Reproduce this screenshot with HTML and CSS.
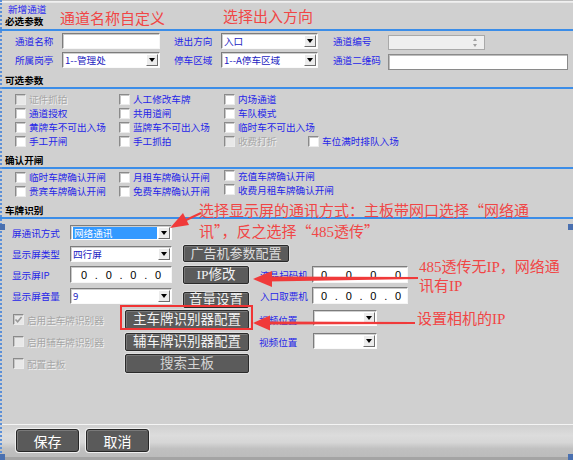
FILE: index.html
```html
<!DOCTYPE html>
<html lang="zh-CN">
<head>
<meta charset="utf-8">
<title>新增通道</title>
<link rel="stylesheet" href="styles.css">
</head>
<body>
<div class="win">
  <div class="main">
    <div class="topline"></div>
    <div class="caption">新增通道</div>
    <div class="sec-title first">必选参数</div>
    <div class="rule"></div>
    <div class="req">
      <span class="lbl">通道名称</span>
      <div class="tb w98"></div>
      <span class="lbl">进出方向</span>
      <div class="sel w97"><span class="val">入口</span><span class="dd"></span></div>
      <span class="lbl">通道编号</span>
      <div class="spin"></div>
      <span class="lbl">所属岗亭</span>
      <div class="sel w98"><span class="val">1--管理处</span><span class="dd"></span></div>
      <span class="lbl">停车区域</span>
      <div class="sel w97"><span class="val">1--A停车区域</span><span class="dd"></span></div>
      <span class="lbl">通道二维码</span>
      <div class="tb w180 dn"></div>
    </div>

    <div class="sec-title">可选参数</div>
    <div class="rule"></div>
    <div class="opt">
      <label class="cb off"><span class="box"></span>证件抓拍</label>
      <label class="cb"><span class="box"></span>人工修改车牌</label>
      <label class="cb"><span class="box"></span>内场通道</label>
      <span></span>
      <label class="cb"><span class="box"></span>通道授权</label>
      <label class="cb"><span class="box"></span>共用道闸</label>
      <label class="cb"><span class="box"></span>车队模式</label>
      <span></span>
      <label class="cb"><span class="box"></span>黄牌车不可出入场</label>
      <label class="cb"><span class="box"></span>蓝牌车不可出入场</label>
      <label class="cb"><span class="box"></span>临时车不可出入场</label>
      <span></span>
      <label class="cb"><span class="box"></span>手工开闸</label>
      <label class="cb"><span class="box"></span>手工抓拍</label>
      <label class="cb off"><span class="box"></span>收费打折</label>
      <label class="cb"><span class="box"></span>车位满时排队入场</label>
    </div>

    <div class="sec-title">确认开闸</div>
    <div class="rule"></div>
    <div class="conf">
      <label class="cb"><span class="box"></span>临时车牌确认开闸</label>
      <label class="cb"><span class="box"></span>月租车牌确认开闸</label>
      <label class="cb up"><span class="box"></span>充值车牌确认开闸</label>
      <label class="cb"><span class="box"></span>贵宾车牌确认开闸</label>
      <label class="cb"><span class="box"></span>免费车牌确认开闸</label>
      <label class="cb up"><span class="box"></span>收费月租车牌确认开闸</label>
    </div>

    <div class="sec-title">车牌识别</div>
    <div class="rule"></div>
    <div class="lpr">
      <span class="lbl c1">屏通讯方式</span>
      <div class="sel w102 h15 c2"><span class="val"><span class="hi">网络通讯</span></span><span class="dd"></span></div>

      <span class="lbl c1">显示屏类型</span>
      <div class="sel w102 c2"><span class="val">四行屏</span><span class="dd"></span></div>
      <div class="btn c4 w106 h17 f13">广告机参数配置</div>

      <span class="lbl c1">显示屏IP</span>
      <div class="ip w102 c2"><span>0</span><i>.</i><span>0</span><i>.</i><span>0</span><i>.</i><span>0</span></div>
      <div class="btn c4 w66 h18">IP修改</div>
      <span class="lbl c5">液晶扫码机</span>
      <div class="ip w96 c6"><span>0</span><i>.</i><span>0</span><i>.</i><span>0</span><i>.</i><span>0</span></div>

      <span class="lbl c1">显示屏音量</span>
      <div class="sel w102 c2"><span class="val">9</span><span class="dd"></span></div>
      <div class="btn c4 w66 h16 low">音量设置</div>
      <span class="lbl c5">入口取票机</span>
      <div class="ip w96 c6"><span>0</span><i>.</i><span>0</span><i>.</i><span>0</span><i>.</i><span>0</span></div>
    </div>

    <div class="lpr2">
      <label class="cb off c1"><span class="box chk"><svg viewBox="0 0 9 9" width="9" height="9"><path d="M1.5 4.5 L3.6 6.8 L7.6 2" fill="none" stroke="#9a9a9a" stroke-width="1.6"/></svg></span>启用主车牌识别器</label>
      <div class="btn c2 w124 h19">主车牌识别器配置</div>
      <span class="lbl c4">视频位置</span>
      <div class="sel w64 c5 top"><span class="val"></span><span class="dd"></span></div>

      <label class="cb off c1"><span class="box"></span>启用辅车牌识别器</label>
      <div class="btn c2 w124 h18">辅车牌识别器配置</div>
      <span class="lbl c4">视频位置</span>
      <div class="sel w64 c5 top1"><span class="val"></span><span class="dd"></span></div>

      <label class="cb off c1"><span class="box"></span>配置主板</label>
      <div class="btn c2 w124 h19 dim">搜索主板</div>
    </div>
  </div>

  <div class="foot">
    <div class="fbtn">保存</div>
    <div class="fbtn">取消</div>
  </div>

  <div class="edge"></div>
  <span class="mark m1"></span>
  <span class="mark m2"></span>
  <span class="mark m3"></span>
  <span class="mark m4"></span>

  <div class="note n1">通道名称自定义</div>
  <div class="note n2">选择出入方向</div>
  <div class="note n3">选择显示屏的通讯方式：主板带网口选择<span class="q">“</span>网络通<br>讯<span class="q">”</span>，反之选择<span class="q">“</span>485透传<span class="q">”</span></div>
  <div class="note n4">485透传无IP，网络通<br>讯有IP</div>
  <div class="note n5">设置相机的IP</div>
  <div class="hl"></div>

  <svg class="arrows" width="573" height="460" viewBox="0 0 573 460">
    <line x1="201" y1="213" x2="184" y2="221" stroke="#f03a3a" stroke-width="2.2"/>
    <polygon points="170,228 189,225 183,213" fill="#f03a3a"/>
    <polygon points="268,276.5 418,277 418,279 268,281.5" fill="#f03a3a"/>
    <polygon points="253,279 272,271 272,287" fill="#f03a3a"/>
    <polygon points="266,321.5 415,322 415,324 266,324.5" fill="#f03a3a"/>
    <polygon points="253,323 270,315.5 270,330.5" fill="#f03a3a"/>
  </svg>
</div>
</body>
</html>
```

FILE: styles.css
```css
* { box-sizing: border-box; }
html, body { margin: 0; padding: 0; }
body {
  width: 573px;
  height: 460px;
  overflow: hidden;
  background: #d0d0d0;
  font-family: "Noto Sans CJK SC", "Liberation Sans", sans-serif;
  font-size: 9.6px;
  color: #000;
}
.win {
  position: relative;
  width: 573px;
  height: 460px;
  display: flex;
  flex-direction: column;
}
.main { flex: 1; }

.topline {
  height: 3px;
  background: linear-gradient(#bdbdbd 0, #bdbdbd 1px, #f4f4f4 1px, #e4e4e4 3px);
}
.caption {
  height: 11px;
  line-height: 11px;
  margin-left: 8px;
  margin-top: 1px;
  color: #2a2af0;
}
.sec-title {
  height: 12px;
  line-height: 12px;
  margin: 6px 0 1px 5px;
  font-weight: bold;
}
.sec-title.first { margin-top: 0; margin-bottom: 2px; }
.rule { height: 2px; background: #3b8de8; }

.lbl {
  color: #2626e8;
  white-space: nowrap;
  line-height: 12px;
}

/* inputs */
.tb {
  height: 16px;
  background: #fff;
  border: 1px solid;
  border-color: #7c7c7c #f6f6f6 #f6f6f6 #7c7c7c;
  box-shadow: inset 1px 1px 0 #c9c9c9;
}
.tb.dn { margin-top: 3px; border: 1px solid #8a8a8a; box-shadow: inset 1px 1px 0 #bdbdbd; }
.w64 { width: 64px; }
.w66 { width: 66px; }
.w96 { width: 96px; }
.w97 { width: 97px; }
.w98 { width: 98px; }
.w102 { width: 102px; }
.w106 { width: 106px; }
.w124 { width: 124px; }
.w180 { width: 180px; }
.h15 { height: 15px !important; }
.h16 { height: 16px; }
.h17 { height: 17px; }
.h18 { height: 18px; }
.h19 { height: 19px; }

.sel {
  height: 16px;
  display: flex;
  align-items: center;
  background: #fff;
  border: 1px solid;
  border-color: #7c7c7c #fafafa #fafafa #7c7c7c;
  box-shadow: inset 1px 1px 0 #cfcfcf;
  padding: 0 1px 0 2px;
}
.sel .val {
  flex: 1;
  color: #1b1bc0;
  line-height: 12px;
  white-space: nowrap;
  overflow: hidden;
}
.sel .hi {
  display: block;
  background: #3399ff;
  color: #fff;
  margin-right: 1px;
  padding-left: 1px;
}
.dd {
  position: relative;
  flex: none;
  width: 12px;
  height: 12px;
  background: #ececec;
  border: 1px solid;
  border-color: #ffffff #6e6e6e #6e6e6e #ffffff;
}
.dd::after {
  content: "";
  position: absolute;
  left: 2px;
  top: 3px;
  border-left: 3px solid transparent;
  border-right: 3px solid transparent;
  border-top: 4px solid #000;
}
.sel.top { align-self: start; }
.sel.top1 { align-self: start; margin-top: 1px; }

.spin {
  position: relative;
  width: 97px;
  height: 15px;
  margin-top: 2px;
  background: #efefef;
  border: 1px solid #a9a9a9;
}
.spin::before, .spin::after {
  content: "";
  position: absolute;
  right: 7px;
  border-left: 2px solid transparent;
  border-right: 2px solid transparent;
}
.spin::before { top: 2px; border-bottom: 3px solid #a0a0a0; }
.spin::after { bottom: 2px; border-top: 3px solid #a0a0a0; }

/* required section */
.req {
  display: grid;
  grid-template-columns: 47px 112px 47px 112px 55px 180px;
  grid-template-rows: 16px 16px;
  row-gap: 3px;
  padding: 2px 0 0 15px;
  align-items: center;
}

/* checkboxes */
.cb {
  display: flex;
  align-items: center;
  gap: 3px;
  white-space: nowrap;
  color: #2626e8;
  line-height: 12px;
}
.box {
  flex: none;
  width: 11px;
  height: 11px;
  background: #fff;
  border: 1px solid;
  border-color: #8a8a8a #ececec #ececec #8a8a8a;
  box-shadow: inset 1px 1px 0 #c6c6c6;
  display: flex;
  align-items: center;
  justify-content: center;
}
.cb.off { color: #a6a6a6; text-shadow: 1px 1px 0 #f0f0f0; }
.cb.off .box { background: #e8e8e8; }
.cb.up { margin-top: -3px; }

.opt {
  display: grid;
  grid-template-columns: 104px 105px 84px auto;
  grid-template-rows: repeat(4, 14px);
  padding: 3px 0 0 15px;
  align-items: center;
}
.conf {
  display: grid;
  grid-template-columns: 104px 105px auto;
  grid-template-rows: 14px 14px;
  padding: 1px 0 0 15px;
  align-items: center;
}

/* plate recognition */
.lpr {
  display: grid;
  grid-template-columns: 58px 102px 11px 77px 52px 96px;
  grid-template-rows: repeat(4, 17px);
  row-gap: 4px;
  padding: 5px 0 0 12px;
  align-items: center;
}
.lpr2 {
  display: grid;
  grid-template-columns: 112px 124px 10px 54px 64px;
  grid-template-rows: repeat(3, 19px);
  row-gap: 3px;
  margin-top: 6px;
  padding-left: 13px;
  align-items: center;
}
.c1 { grid-column: 1; }
.c2 { grid-column: 2; }
.c4 { grid-column: 4; }
.c5 { grid-column: 5; }
.c6 { grid-column: 6; }
.lpr .c4.w106 { grid-column: 4 / span 2; }

.ip {
  height: 17px;
  display: flex;
  align-items: center;
  padding-left: 9px;
  background: #fff;
  border: 1px solid;
  border-color: #7c7c7c #f6f6f6 #f6f6f6 #7c7c7c;
  box-shadow: inset 1px 1px 0 #c9c9c9;
  font-family: "Liberation Sans", sans-serif;
  font-size: 11px;
  line-height: 12px;
}
.ip span { width: 8px; text-align: center; }
.ip i { font-style: normal; width: 16.7px; text-align: center; }
.ip.w96 { padding-left: 7px; }

.btn {
  display: flex;
  align-items: center;
  justify-content: center;
  background: #5b5b5b;
  color: #f2f2f2;
  border: 1px solid #2a2a2a;
  border-radius: 2px;
  box-shadow: 0 0 0 1px #dedede, inset 1px 1px 0 #777;
  font-family: "Liberation Serif", "Noto Sans CJK SC", serif;
  font-size: 13.5px;
  line-height: 1;
  white-space: nowrap;
}
.btn.f13 { font-size: 13px; color: #dedede; }
.btn.low { align-self: start; margin-top: 5px; }
.btn.dim { color: #d4d4d4; }

/* footer */
.foot {
  height: 36px;
  flex: none;
  display: flex;
  gap: 7px;
  padding: 4px 0 0 16px;
  border-top: 1px solid #f4f4f4;
  background: linear-gradient(#d0d0d0 0%, #dcdcdc 30%, #d6d6d6 50%, #c0c0c0 68%, #bcbcbc 90%, #a4a4a4 91%, #a4a4a4 100%);
}
.fbtn {
  width: 63px;
  height: 23px;
  display: flex;
  align-items: center;
  justify-content: center;
  background: #5a5a5a;
  color: #fff;
  border: 1px solid #262626;
  border-radius: 3px;
  box-shadow: 0 0 0 1px #eeeeee, inset 1px 1px 0 #7a7a7a;
  font-size: 14px;
  line-height: 1;
}

/* design-mode marks */
.edge {
  position: absolute;
  left: 0;
  top: 0;
  bottom: 0;
  border-left: 2px dotted #5b8fd8;
}
.mark { position: absolute; width: 5px; height: 6px; background: #4a70b0; }
.m1 { left: 0; top: 224px; }
.m2 { left: 568px; top: 224px; }
.m3 { left: 0; top: 454px; }
.m4 { left: 568px; top: 454px; }

/* annotations */
.note {
  position: absolute;
  color: #f04646;
  font-family: "Liberation Serif", "Noto Sans CJK SC", serif;
  font-size: 15px;
  line-height: 19px;
  white-space: nowrap;
}
.note .q { font-family: "Noto Sans CJK SC", sans-serif; }
.n1 { left: 60px; top: 10px; }
.n2 { left: 223px; top: 8px; }
.n3 { left: 199px; top: 200px; line-height: 20px; }
.n4 { left: 419px; top: 258px; }
.n5 { left: 417px; top: 310px; }
.hl {
  position: absolute;
  left: 120px;
  top: 305px;
  width: 133px;
  height: 25px;
  border: 2px solid #f03434;
}
.arrows { position: absolute; left: 0; top: 0; pointer-events: none; }
```
